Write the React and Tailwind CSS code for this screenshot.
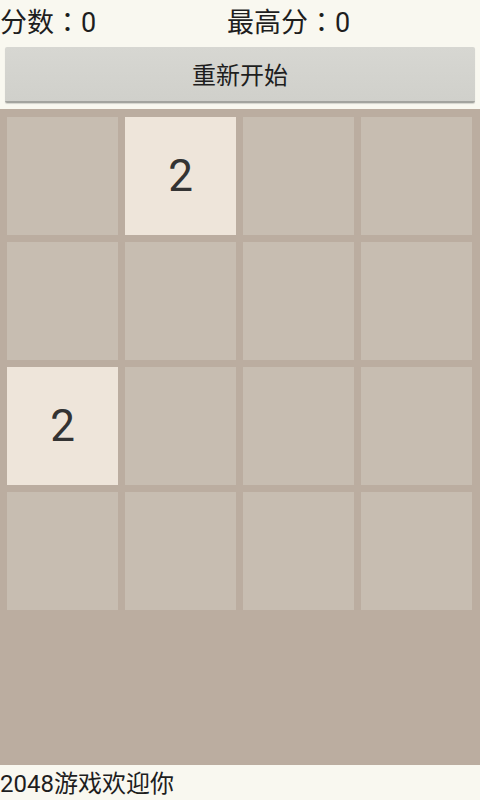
import React from 'react';

const board = [
  [0, 2, 0, 0],
  [0, 0, 0, 0],
  [2, 0, 0, 0],
  [0, 0, 0, 0],
];

const font = { fontFamily: "Roboto, 'Noto Sans CJK SC', sans-serif" };

// centred full-width colon, as on the device
const Colon = () => (
  <span style={{ fontFamily: "'Noto Sans CJK TC', sans-serif" }}>：</span>
);

export default function App() {
  return (
    <div
      className="w-[480px] h-[800px] flex flex-col bg-[#f9f8f0] text-[#1e1e1e] overflow-hidden"
      style={font}
    >
      {/* Scores */}
      <div className="h-[44px] flex items-center text-[27px] leading-none">
        <div className="w-[227px]">
          分数<Colon />0
        </div>
        <div>
          最高分<Colon />0
        </div>
      </div>

      {/* Restart */}
      <div className="px-[5px] pt-[3px]">
        <button className="w-full h-[56px] rounded-[2px] bg-gradient-to-b from-[#d7d7d2] to-[#d0d0cb] border-b-[2px] border-[#a3a49f] shadow-[0_1px_1px_rgba(0,0,0,0.15)] text-[24px] text-[#1e1e1e] leading-none pt-[3px]">
          重新开始
        </button>
      </div>

      {/* Board */}
      <div className="mt-[6px] h-[656px] bg-[#bbada0] pl-[7px] pr-[8px] pt-[8px]">
        <div className="grid grid-cols-4 gap-[7px]">
          {board.flat().map((v, i) => (
            <div
              key={i}
              className={`h-[118px] flex items-center justify-center text-[44px] text-[#333333] ${
                v ? 'bg-[#eee5da]' : 'bg-[#c7bdb1]'
              }`}
            >
              {v ? v : ''}
            </div>
          ))}
        </div>
      </div>

      {/* Footer */}
      <div className="flex-1 flex items-center text-[24px] leading-none pt-[2px]">
        2048游戏欢迎你
      </div>
    </div>
  );
}
